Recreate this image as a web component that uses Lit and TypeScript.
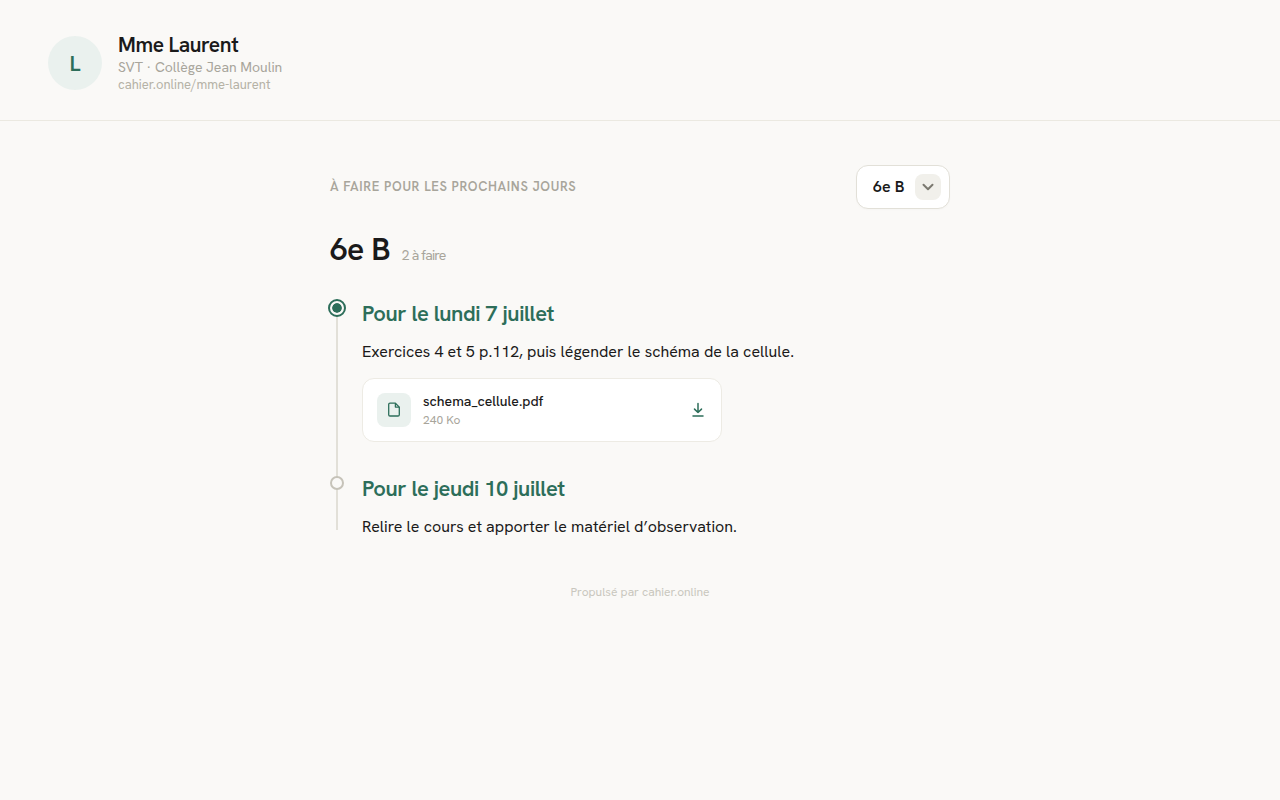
import { LitElement, html, css, nothing } from "lit";
import { customElement, property, state } from "lit/decorators.js";

interface Attachment {
  name: string;
  size: string;
}

interface Task {
  title: string;
  body: string;
  file?: Attachment;
}

const TASKS: Task[] = [
  {
    title: "Pour le lundi 7 juillet",
    body: "Exercices 4 et 5 p.112, puis légender le schéma de la cellule.",
    file: { name: "schema_cellule.pdf", size: "240 Ko" },
  },
  {
    title: "Pour le jeudi 10 juillet",
    body: "Relire le cours et apporter le matériel d’observation.",
  },
];

@customElement("file-card")
class FileCard extends LitElement {
  @property({ attribute: false }) file!: Attachment;

  static styles = css`
    :host {
      display: block;
      max-width: 360px;
    }
    .card {
      display: flex;
      align-items: center;
      gap: 12px;
      box-sizing: border-box;
      padding: 12px 14px;
      border: 1px solid #edebe4;
      border-radius: 12px;
      background: #fff;
      color: #1a1a1a;
      text-decoration: none;
    }
    .thumb {
      display: grid;
      place-items: center;
      width: 34px;
      height: 34px;
      border-radius: 8px;
      background: #eaf1ee;
      color: #2d6e5a;
    }
    .info {
      flex: 1;
      min-width: 0;
    }
    .name,
    .size {
      display: block;
    }
    .name {
      font-size: 14px;
      font-weight: 500;
      line-height: 20px;
    }
    .size {
      font-size: 12px;
      line-height: 18px;
      color: #a8a59b;
    }
    .download {
      color: #2d6e5a;
    }
    svg {
      display: block;
    }
  `;

  render() {
    return html`
      <a class="card" href="#" download>
        <span class="thumb">
          <svg width="16" height="16" viewBox="0 0 16 16" fill="none" stroke="currentColor" stroke-width="1.3" stroke-linejoin="round" aria-hidden="true">
            <path d="M9.4 1.2H4A1.3 1.3 0 0 0 2.7 2.5v10.2A1.3 1.3 0 0 0 4 14h8a1.3 1.3 0 0 0 1.3-1.3V5.1z" />
            <path d="M9.4 1.2v3.9h3.9" />
          </svg>
        </span>
        <span class="info">
          <span class="name">${this.file.name}</span>
          <span class="size">${this.file.size}</span>
        </span>
        <svg class="download" width="18" height="18" viewBox="0 0 18 18" fill="none" stroke="currentColor" stroke-width="1.5" stroke-linecap="round" stroke-linejoin="round" aria-hidden="true">
          <path d="M9 2.5v9M5.5 8.1 9 11.5l3.5-3.4M4 15h10" />
        </svg>
      </a>
    `;
  }
}

@customElement("app-root")
class AppRoot extends LitElement {
  @state() private group = "6e B";

  static styles = css`
    :host {
      display: block;
      min-height: 100vh;
      background: #faf9f7;
      color: #1a1a1a;
      font-family: "Hanken Grotesk", Inter, sans-serif;
    }
    h1,
    h2,
    h3,
    p,
    ol {
      margin: 0;
      padding: 0;
    }
    .header {
      display: flex;
      align-items: center;
      gap: 16px;
      padding: 32px 48px 26px;
      border-bottom: 1px solid #ebe9e1;
    }
    .avatar {
      display: grid;
      place-items: center;
      width: 54px;
      height: 54px;
      border-radius: 50%;
      background: #eaf1ee;
      color: #2d6e5a;
      font-size: 22px;
      font-weight: 600;
    }
    .teacher {
      font-size: 21px;
      font-weight: 600;
      line-height: 26px;
      letter-spacing: -0.02em;
    }
    .school {
      font-size: 14px;
      line-height: 18px;
      color: #a8a59b;
    }
    .address {
      display: block;
      font-size: 13px;
      line-height: 18px;
      color: #b5b2a6;
      text-decoration: none;
    }
    .main {
      max-width: 620px;
      margin: 0 auto;
      padding: 44px 24px;
    }
    .bar {
      display: flex;
      align-items: center;
      justify-content: space-between;
    }
    .label {
      font-size: 13px;
      font-weight: 600;
      line-height: 18px;
      letter-spacing: 0.05em;
      text-transform: uppercase;
      color: #a8a59b;
    }
    .picker {
      position: relative;
      display: block;
    }
    .select {
      display: block;
      appearance: none;
      box-sizing: border-box;
      height: 44px;
      margin: 0;
      padding: 0 44px 0 16px;
      border: 1px solid #e2e0d8;
      border-radius: 12px;
      background: #fff;
      box-shadow: 0 1px 2px rgba(0, 0, 0, 0.02);
      color: #1a1a1a;
      font: 600 16px/20px "Hanken Grotesk", Inter, sans-serif;
    }
    .chevron {
      position: absolute;
      top: 9px;
      right: 9px;
      display: grid;
      place-items: center;
      width: 26px;
      height: 26px;
      border-radius: 8px;
      background: #f1f0eb;
      color: #7b7970;
      pointer-events: none;
    }
    .heading {
      display: flex;
      align-items: baseline;
      gap: 12px;
      margin-top: 20px;
      line-height: 40px;
      letter-spacing: -0.8px;
    }
    .group {
      font-size: 32px;
      font-weight: 600;
    }
    .count {
      font-size: 14px;
      line-height: 20px;
      color: #a8a59b;
    }
    .timeline {
      position: relative;
      display: grid;
      gap: 32px;
      margin-top: 30px;
      list-style: none;
    }
    .timeline::before {
      content: "";
      position: absolute;
      top: 9px;
      bottom: 9px;
      left: 6px;
      width: 2px;
      background: #e2e0d8;
    }
    .item {
      display: grid;
      grid-template-columns: 14px minmax(0, 1fr);
      column-gap: 18px;
    }
    .rail {
      display: flex;
      justify-content: center;
      align-items: center;
      height: 18px;
      z-index: 1;
    }
    .dot {
      flex: none;
      box-sizing: border-box;
      width: 14px;
      height: 14px;
      border: 2px solid #c6c3b9;
      border-radius: 50%;
      background: #faf9f7;
    }
    .dot.current {
      width: 18px;
      height: 18px;
      padding: 2px;
      border-color: #2d6e5a;
      background: #2d6e5a content-box;
      box-shadow: inset 0 0 0 2px #faf9f7;
    }
    .title {
      font-size: 22px;
      font-weight: 600;
      line-height: 30px;
      letter-spacing: -0.02em;
      color: #2d6e5a;
    }
    .body {
      margin-top: 11px;
      font-size: 16px;
      line-height: 24px;
    }
    .file {
      margin-top: 14px;
    }
    .footer {
      margin-top: 45px;
      text-align: center;
      font-size: 12px;
      line-height: 16px;
      color: #c9c7be;
    }
  `;

  private pick(event: Event) {
    this.group = (event.target as HTMLSelectElement).value;
  }

  render() {
    return html`
      <header class="header">
        <div class="avatar" aria-hidden="true">L</div>
        <div>
          <h1 class="teacher">Mme Laurent</h1>
          <p class="school">SVT · Collège Jean Moulin</p>
          <a class="address" href="#">cahier.online/mme-laurent</a>
        </div>
      </header>
      <main class="main">
        <div class="bar">
          <label class="label" for="group">À faire pour les prochains jours</label>
          <div class="picker">
            <select class="select" id="group" @change=${this.pick}>
              <option selected>6e B</option>
            </select>
            <span class="chevron">
              <svg width="14" height="14" viewBox="0 0 14 14" fill="none" stroke="currentColor" stroke-width="2" stroke-linecap="round" stroke-linejoin="round" aria-hidden="true">
                <path d="M2.5 4.8 7 9.2l4.5-4.4" />
              </svg>
            </span>
          </div>
        </div>
        <div class="heading">
          <h2 class="group">${this.group}</h2>
          <span class="count">${TASKS.length} à faire</span>
        </div>
        <ol class="timeline">
          ${TASKS.map(
            (task, index) => html`
              <li class="item">
                <div class="rail">
                  <span class="dot ${index === 0 ? "current" : ""}"></span>
                </div>
                <div>
                  <h3 class="title">${task.title}</h3>
                  <p class="body">${task.body}</p>
                  ${task.file
                    ? html`<file-card class="file" .file=${task.file}></file-card>`
                    : nothing}
                </div>
              </li>
            `
          )}
        </ol>
        <footer class="footer">Propulsé par cahier.online</footer>
      </main>
    `;
  }
}
